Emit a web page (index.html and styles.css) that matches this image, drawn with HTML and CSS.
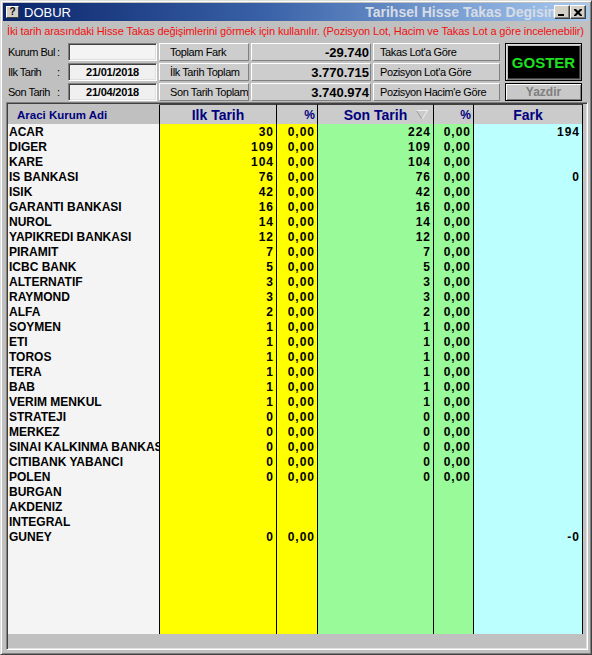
FILE: index.html
```html
<!DOCTYPE html>
<html lang="tr">
<head>
<meta charset="utf-8">
<title>DOBUR</title>
<link rel="stylesheet" href="styles.css">
</head>
<body>
<div class="window">
  <div class="titlebar">
    <span class="app-icon">?</span>
    <span class="app-name">DOBUR</span>
    <span class="caption"><span class="caption-text">Tarihsel Hisse Takas Degisim</span></span>
    <span class="tb-btn"><svg width="8" height="7" viewBox="0 0 8 7"><rect x="0" y="5" width="6" height="2" fill="#000"/></svg></span>
    <span class="tb-btn"><svg width="8" height="7" viewBox="0 0 8 7"><path d="M0 0h2l2 2 2-2h2v1L5.5 3.5 8 6v1H6L4 5 2 7H0V6l2.5-2.5L0 1z" fill="#000"/></svg></span>
  </div>
  <div class="hint">İki tarih arasındaki Hisse Takas değişimlerini görmek için kullanılır. (Pozisyon Lot, Hacim ve Takas Lot a göre incelenebilir)</div>
  <div class="controls">
    <div class="lbl"><span class="lbl-name">Kurum Bul</span><span>:</span></div>
    <div class="field"></div>
    <div class="panel">Toplam Fark</div>
    <div class="panel value">-29.740</div>
    <div class="panel option">Takas Lot'a Göre</div>
    <button class="btn-go">GOSTER</button>

    <div class="lbl"><span class="lbl-name">Ilk Tarih</span><span>:</span></div>
    <div class="field date">21/01/2018</div>
    <div class="panel">İlk Tarih Toplam</div>
    <div class="panel value">3.770.715</div>
    <div class="panel option">Pozisyon Lot'a Göre</div>

    <div class="lbl"><span class="lbl-name">Son Tarih</span><span>:</span></div>
    <div class="field date">21/04/2018</div>
    <div class="panel">Son Tarih Toplam</div>
    <div class="panel value">3.740.974</div>
    <div class="panel option">Pozisyon Hacim'e Göre</div>
    <button class="btn-print">Yazdir</button>
  </div>

  <div class="grid">
    <div class="table-wrap">
      <table class="data">
        <colgroup>
          <col class="w-name"><col class="w-ilk"><col class="w-p1"><col class="w-son"><col class="w-p2"><col class="w-fark">
        </colgroup>
        <thead>
          <tr>
            <th class="h-name">Araci Kurum Adi</th>
            <th class="h-big">Ilk Tarih</th>
            <th class="h-pct">%</th>
            <th class="h-big h-sort">Son Tarih<svg class="sort" width="12" height="10" viewBox="0 0 12 10"><path d="M0.5 0.5 L6 9.5" stroke="#9a9a9a" fill="none"/><path d="M0.5 0.5 H11.5 L6 9.5" stroke="#f0f0f0" fill="none"/></svg></th>
            <th class="h-pct">%</th>
            <th class="h-big">Fark</th>
          </tr>
        </thead>
        <tbody>
          <tr><td>ACAR</td><td>30</td><td>0,00</td><td>224</td><td>0,00</td><td>194</td></tr>
          <tr><td>DIGER</td><td>109</td><td>0,00</td><td>109</td><td>0,00</td><td></td></tr>
          <tr><td>KARE</td><td>104</td><td>0,00</td><td>104</td><td>0,00</td><td></td></tr>
          <tr><td>IS BANKASI</td><td>76</td><td>0,00</td><td>76</td><td>0,00</td><td>0</td></tr>
          <tr><td>ISIK</td><td>42</td><td>0,00</td><td>42</td><td>0,00</td><td></td></tr>
          <tr><td>GARANTI BANKASI</td><td>16</td><td>0,00</td><td>16</td><td>0,00</td><td></td></tr>
          <tr><td>NUROL</td><td>14</td><td>0,00</td><td>14</td><td>0,00</td><td></td></tr>
          <tr><td>YAPIKREDI BANKASI</td><td>12</td><td>0,00</td><td>12</td><td>0,00</td><td></td></tr>
          <tr><td>PIRAMIT</td><td>7</td><td>0,00</td><td>7</td><td>0,00</td><td></td></tr>
          <tr><td>ICBC BANK</td><td>5</td><td>0,00</td><td>5</td><td>0,00</td><td></td></tr>
          <tr><td>ALTERNATIF</td><td>3</td><td>0,00</td><td>3</td><td>0,00</td><td></td></tr>
          <tr><td>RAYMOND</td><td>3</td><td>0,00</td><td>3</td><td>0,00</td><td></td></tr>
          <tr><td>ALFA</td><td>2</td><td>0,00</td><td>2</td><td>0,00</td><td></td></tr>
          <tr><td>SOYMEN</td><td>1</td><td>0,00</td><td>1</td><td>0,00</td><td></td></tr>
          <tr><td>ETI</td><td>1</td><td>0,00</td><td>1</td><td>0,00</td><td></td></tr>
          <tr><td>TOROS</td><td>1</td><td>0,00</td><td>1</td><td>0,00</td><td></td></tr>
          <tr><td>TERA</td><td>1</td><td>0,00</td><td>1</td><td>0,00</td><td></td></tr>
          <tr><td>BAB</td><td>1</td><td>0,00</td><td>1</td><td>0,00</td><td></td></tr>
          <tr><td>VERIM MENKUL</td><td>1</td><td>0,00</td><td>1</td><td>0,00</td><td></td></tr>
          <tr><td>STRATEJI</td><td>0</td><td>0,00</td><td>0</td><td>0,00</td><td></td></tr>
          <tr><td>MERKEZ</td><td>0</td><td>0,00</td><td>0</td><td>0,00</td><td></td></tr>
          <tr><td>SINAI KALKINMA BANKASI</td><td>0</td><td>0,00</td><td>0</td><td>0,00</td><td></td></tr>
          <tr><td>CITIBANK YABANCI</td><td>0</td><td>0,00</td><td>0</td><td>0,00</td><td></td></tr>
          <tr><td>POLEN</td><td>0</td><td>0,00</td><td>0</td><td>0,00</td><td></td></tr>
          <tr><td>BURGAN</td><td></td><td></td><td></td><td></td><td></td></tr>
          <tr><td>AKDENIZ</td><td></td><td></td><td></td><td></td><td></td></tr>
          <tr><td>INTEGRAL</td><td></td><td></td><td></td><td></td><td></td></tr>
          <tr><td>GUNEY</td><td>0</td><td>0,00</td><td></td><td></td><td>-0</td></tr>
          <tr class="filler"><td></td><td></td><td></td><td></td><td></td><td></td></tr>
        </tbody>
      </table>
    </div>
    <div class="hscroll"></div>
  </div>
</div>
</body>
</html>
```

FILE: styles.css
```css
* { box-sizing: border-box; }
html, body { margin: 0; padding: 0; }
body {
  width: 592px;
  height: 655px;
  overflow: hidden;
  background: #c0c0c0;
  font-family: "Liberation Sans", Arial, sans-serif;
}

.window {
  height: 655px;
  display: flex;
  flex-direction: column;
  background: #c0c0c0;
  border: 1px solid;
  border-color: #dfdfdf #404040 #404040 #dfdfdf;
  box-shadow: inset 1px 1px #ffffff, inset -1px -1px #808080;
  padding: 2px;
}

/* title bar */
.titlebar {
  flex: none;
  height: 18px;
  display: flex;
  align-items: center;
  padding: 0 3px 0 3px;
  background: linear-gradient(90deg, #0a246a 0%, #3a62a8 45%, #a6caf0 100%);
}
.app-icon {
  width: 13px;
  height: 12px;
  margin-right: 5px;
  background: #d4d0c8;
  border: 1px solid;
  border-color: #ffffff #404040 #404040 #ffffff;
  color: #000;
  font: bold 10px/10px "Liberation Sans", Arial, sans-serif;
  text-align: center;
}
.app-name {
  color: #ffffff;
  font-size: 13px;
}
.caption {
  flex: 1;
  display: flex;
  justify-content: flex-end;
  overflow: hidden;
  white-space: nowrap;
}
.caption-text {
  flex: none;
  margin-right: -6px;
  color: #d8dce6;
  font-weight: bold;
  font-size: 14px;
}
.tb-btn {
  flex: none;
  width: 16px;
  height: 14px;
  display: flex;
  align-items: center;
  justify-content: center;
  background: #d4d0c8;
  border: 1px solid;
  border-color: #ffffff #404040 #404040 #ffffff;
  box-shadow: inset -1px -1px #808080;
}
.tb-btn svg { display: block; }

/* hint line */
.hint {
  flex: none;
  height: 20px;
  line-height: 20px;
  padding-left: 4px;
  color: #f01010;
  font-size: 11px;
  letter-spacing: -0.12px;
  white-space: nowrap;
  overflow: hidden;
}

/* controls */
.controls {
  flex: none;
  display: grid;
  grid-template-columns: 58px 89px 90px 120px 127px 80px;
  grid-auto-rows: 18px;
  gap: 2px 2px;
  margin: 2px 0 0 5px;
}
.lbl {
  display: flex;
  align-items: center;
  font-size: 11px;
  letter-spacing: -0.5px;
  color: #000;
}
.lbl-name { width: 49px; flex: none; }
.field {
  background: #f4f4f4;
  border: 1px solid;
  border-color: #808080 #ffffff #ffffff #808080;
  box-shadow: inset 1px 1px #404040, inset -1px -1px #dfdfdf;
}
.date {
  display: flex;
  align-items: center;
  justify-content: center;
  font-size: 11px;
  font-weight: bold;
  letter-spacing: -0.2px;
  background: #f0f0f0;
}
.panel {
  display: flex;
  align-items: center;
  padding-left: 10px;
  background: #cdcdcd;
  border: 1px solid;
  border-color: #ffffff #808080 #808080 #ffffff;
  font-size: 11px;
  letter-spacing: -0.4px;
  white-space: nowrap;
  overflow: hidden;
  color: #000;
}
.panel.option { padding-left: 6px; }
.panel.value {
  justify-content: flex-end;
  padding: 0 1px 0 0;
  font-size: 13px;
  font-weight: bold;
  letter-spacing: 0;
}
.btn-go {
  grid-row: span 2;
  margin: 0 0 0 3px;
  padding: 0;
  background: #000000;
  color: #1fe01f;
  font: bold 15px "Liberation Sans", Arial, sans-serif;
  border: 1px solid #000;
  box-shadow: inset 1px 1px #dfdfdf, inset -1px -1px #808080, inset 2px 2px #c0c0c0, inset -2px -2px #404040;
}
.btn-print {
  margin: 0 0 0 3px;
  padding: 0;
  background: #c8c8c8;
  color: #7f7f7f;
  font: bold 12px "Liberation Sans", Arial, sans-serif;
  border: 1px solid #000;
  box-shadow: inset 1px 1px #ffffff, inset -1px -1px #808080;
}

/* grid */
.grid {
  flex: 1;
  min-height: 0;
  display: flex;
  flex-direction: column;
  margin: 1px 1px 2px 3px;
  background: #c0c0c0;
  border: 1px solid;
  border-color: #808080 #ffffff #ffffff #808080;
  box-shadow: inset 1px 1px #404040, inset -1px -1px #dfdfdf;
  padding: 1px;
}
.table-wrap {
  flex: 1;
  min-height: 0;
}
.hscroll {
  flex: none;
  height: 14px;
}
.data {
  width: 575px;
  height: 100%;
  table-layout: fixed;
  border-collapse: separate;
  border-spacing: 0;
}
.w-name { width: 152px; }
.w-ilk { width: 117px; }
.w-p1 { width: 41px; }
.w-son { width: 116px; }
.w-p2 { width: 40px; }
.w-fark { width: 109px; }

.data th {
  height: 20px;
  padding: 0;
  background: #cbcbcb;
  border-top: 1px solid #404040;
  border-right: 1px solid #000;
  color: #000080;
  font-weight: bold;
  font-size: 14px;
  text-align: center;
  white-space: nowrap;
  overflow: hidden;
}
.data th.h-name {
  text-align: left;
  padding-left: 9px;
  font-size: 11.5px;
  background: #c0c0c0;
  border-top-color: #c0c0c0;
}
.data th.h-pct {
  text-align: right;
  padding-right: 2px;
  font-size: 12px;
}
.data th.h-sort { position: relative; }
.sort {
  position: absolute;
  right: 5px;
  top: 5px;
}

.data td {
  height: 15px;
  padding: 1px 2px 0 0;
  line-height: 14px;
  border-right: 1px solid #000;
  font-weight: bold;
  font-size: 12px;
  letter-spacing: 1px;
  text-align: right;
  color: #000;
  white-space: nowrap;
  overflow: hidden;
}
.data td:nth-child(1) {
  text-align: left;
  padding: 1px 0 0 1px;
  letter-spacing: 0;
  background: #f4f4f4;
}
.data td:nth-child(2),
.data td:nth-child(3) { background: #ffff00; }
.data td:nth-child(4),
.data td:nth-child(5) { background: #99fa99; }
.data td:nth-child(6) { background: #bbffff; }
.data tr.filler td { height: auto; }
```
